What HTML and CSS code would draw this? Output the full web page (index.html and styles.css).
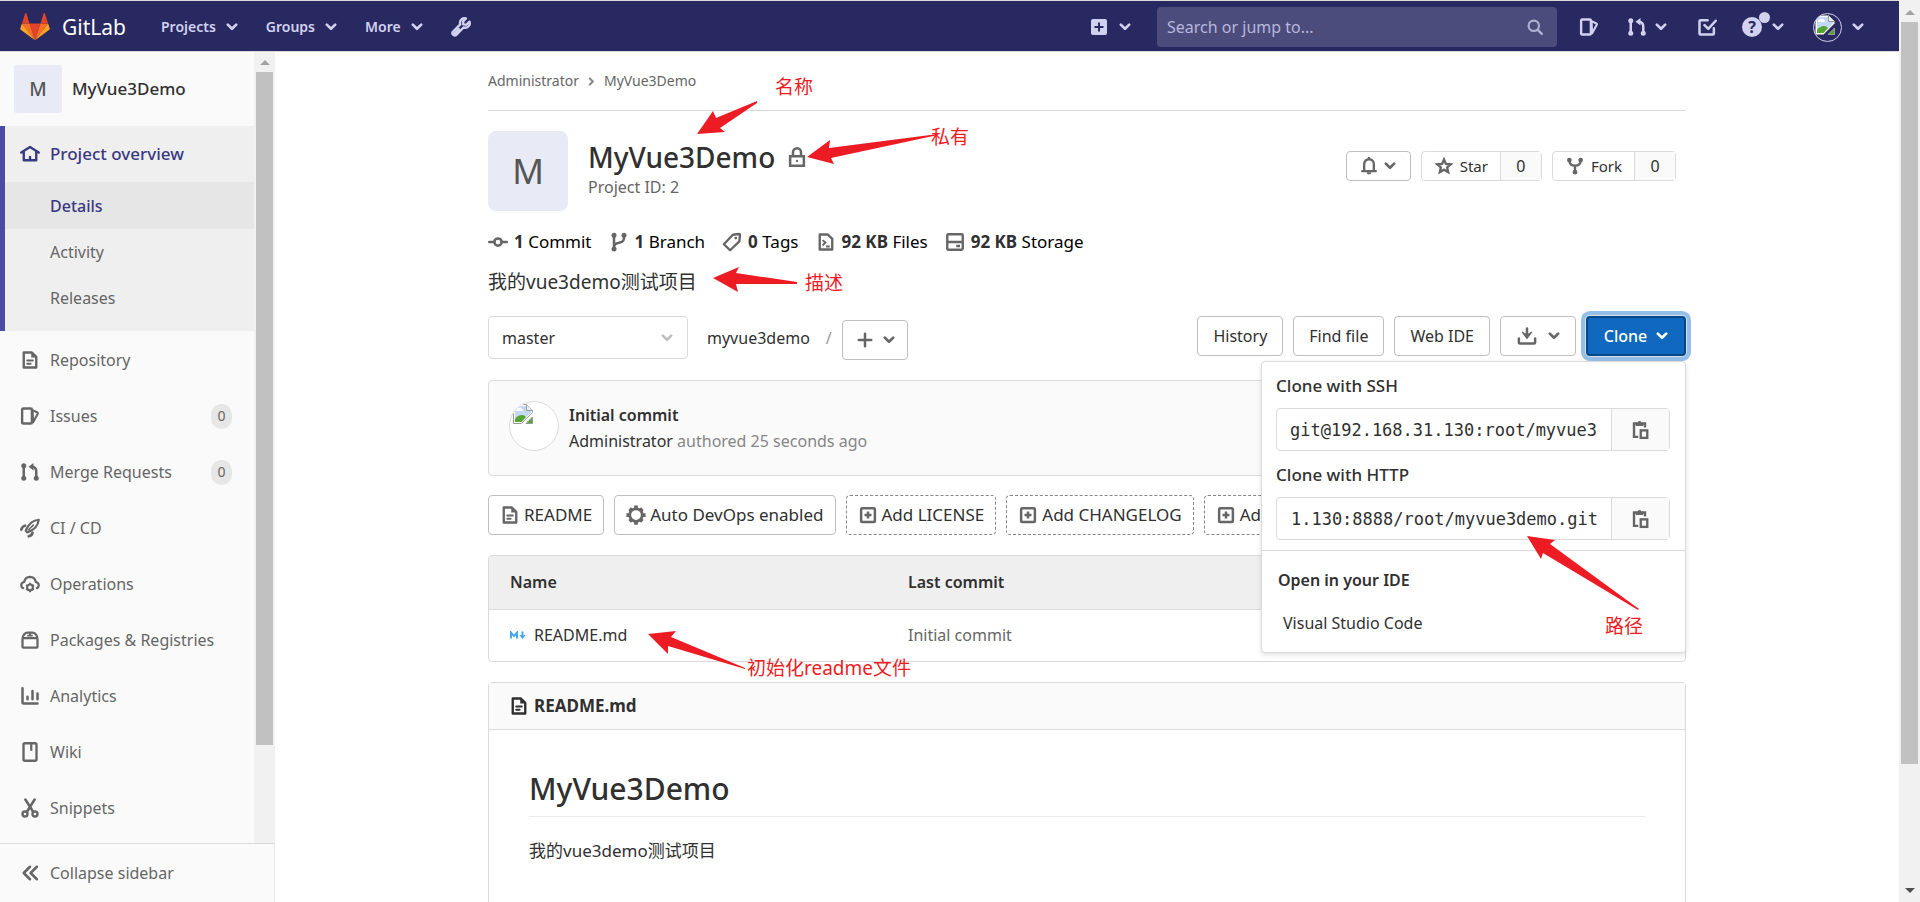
FILE: index.html
```html
<!DOCTYPE html>
<html lang="en">
<head>
<meta charset="utf-8">
<title>Administrator / MyVue3Demo · GitLab</title>
<link rel="stylesheet" href="styles.css">
</head>
<body>
<svg class="sprite" aria-hidden="true">
  <symbol id="chevron" viewBox="0 0 10 10"><path d="M1.5 3 5 6.5 8.5 3" fill="none" stroke="currentColor" stroke-width="2.2" stroke-linecap="round" stroke-linejoin="round"/></symbol>
  <symbol id="home" viewBox="0 0 16 16"><path d="M1 6.8 8 2.4l7 4.400M3 6v7h10V6M8 13v-2.600" fill="none" stroke="currentColor" stroke-width="1.9" stroke-linecap="round" stroke-linejoin="round"/></symbol>
  <symbol id="doc" viewBox="0 0 16 16"><path d="M3 2h6.500L13 5.500V14H3z" fill="none" stroke="currentColor" stroke-width="1.900" stroke-linejoin="round"/><path d="M9 1.500V6h4.500z" fill="currentColor"/><path d="M5.800 8.300h4.400M5.800 11h2.700" stroke="currentColor" stroke-width="1.600" stroke-linecap="round"/></symbol>
  <symbol id="issues" viewBox="0 0 16 16"><path d="M2.500 2h6.200q.8 0 .8.800v10.400q0 .8-.8.800H2.500q-.8 0-.8-.8V2.800q0-.8.800-.8z" fill="none" stroke="currentColor" stroke-width="1.900"/><path d="M10 3.300 14 5.200q.5.400.2 1L10.500 13z" fill="none" stroke="currentColor" stroke-width="1.700" stroke-linejoin="round"/></symbol>
  <symbol id="merge" viewBox="0 0 16 16"><path d="M3 3.500v9M13 12.500V7.500Q13 4 9.500 3.800" fill="none" stroke="currentColor" stroke-width="2"/><circle cx="3" cy="3" r="2" fill="currentColor"/><circle cx="3" cy="13" r="2" fill="currentColor"/><circle cx="13" cy="13" r="2" fill="currentColor"/><path d="M10.800.8v6L6.800 3.800z" fill="currentColor"/></symbol>
  <symbol id="rocket" viewBox="0 0 16 16"><path d="M15 1.400C11 1.600 7 4.400 4.600 10.200l1.300 1.300C11.500 9.500 14.600 5.400 15 1.400z" fill="none" stroke="currentColor" stroke-width="1.800" stroke-linejoin="round"/><path d="M11 5.300 6.500 9.800" fill="none" stroke="currentColor" stroke-width="1.200"/><path d="M1 9.200Q2 6.500 4 6.200M7 14.600q2.700-.7 3-2.800" fill="none" stroke="currentColor" stroke-width="2.200" stroke-linecap="round"/></symbol>
  <symbol id="ops" viewBox="0 0 16 16"><path d="M2.500 11.300Q.9 10.600 1 8.800q.2-2 2.300-2.400Q4.200 2.400 8 2.300q3.800.1 4.700 4.100 2.100.4 2.300 2.400.1 1.800-1.500 2.500" fill="none" stroke="currentColor" stroke-width="1.800" stroke-linecap="round"/><circle cx="8" cy="10.700" r="2.300" fill="none" stroke="currentColor" stroke-width="1.700"/><path d="M8 7v1.400M8 13v1.500M4.800 8.900l1.200.7M10 11.900l1.200.7M4.800 12.600l1.200-.7M10 9.600l1.200-.7" stroke="currentColor" stroke-width="1.500"/></symbol>
  <symbol id="package" viewBox="0 0 16 16"><path d="M2 6.500h12v6.800q0 .7-.7.700H2.700q-.7 0-.7-.7zM2 6.500Q3 2 6 2h4q3 0 4 4.500" fill="none" stroke="currentColor" stroke-width="1.800" stroke-linejoin="round"/><path d="M8 2v2.500M5.800 4.500h4.400" fill="none" stroke="currentColor" stroke-width="1.500"/></symbol>
  <symbol id="chart" viewBox="0 0 16 16"><path d="M2 1.800V13q0 1 1 1h11M6 8.500v2M10 4v6.500M14 6v4.500" fill="none" stroke="currentColor" stroke-width="2" stroke-linecap="round"/></symbol>
  <symbol id="book" viewBox="0 0 16 16"><rect x="2.800" y="1" width="10.400" height="14" rx="1.200" fill="none" stroke="currentColor" stroke-width="1.900"/><path d="M9 1v6" stroke="currentColor" stroke-width="1.800"/></symbol>
  <symbol id="scissors" viewBox="0 0 16 16"><path d="M4.300 1.200 10.500 11M11.700 1.200 5.500 11" stroke="currentColor" stroke-width="2" stroke-linecap="round"/><circle cx="4" cy="12.800" r="2" fill="none" stroke="currentColor" stroke-width="1.900"/><circle cx="12" cy="12.800" r="2" fill="none" stroke="currentColor" stroke-width="1.900"/></symbol>
  <symbol id="collapse" viewBox="0 0 16 16"><path d="M8 3 3 8l5 5M13.500 3l-5 5 5 5" fill="none" stroke="currentColor" stroke-width="2" stroke-linecap="round" stroke-linejoin="round"/></symbol>
  <symbol id="wrench" viewBox="0 0 16 16"><path d="M14.800 3.700 12.300 6.200 9.800 5.900 9.700 3.500 12 1.200C9.600.5 7.300 2 7.200 4.500q0 .8.200 1.400L1.500 11.800q-.9 1.300.2 2.400t2.500.2l5.800-6q3.200.8 4.700-1.800.6-1.300.1-2.900zM3 13l3.300-3.300" fill="none" stroke="currentColor" stroke-width="1.900" stroke-linejoin="round" stroke-linecap="round"/></symbol>
  <symbol id="plus-solid" viewBox="0 0 16 16"><path fill-rule="evenodd" d="M2 0h12a2 2 0 0 1 2 2v12a2 2 0 0 1-2 2H2a2 2 0 0 1-2-2V2a2 2 0 0 1 2-2zm5 3.500V7H3.500v2H7v3.500h2V9h3.500V7H9V3.500z" fill="currentColor"/></symbol>
  <symbol id="search" viewBox="0 0 16 16"><circle cx="6.800" cy="6.800" r="5.200" fill="none" stroke="currentColor" stroke-width="2.200"/><path d="m10.800 10.800 4 4" stroke="currentColor" stroke-width="2.400" stroke-linecap="round"/></symbol>
  <symbol id="todo" viewBox="0 0 16 16"><path d="M8.500 2.500H2.800q-.8 0-.8.800v9.900q0 .8.800.8h9.900q.8 0 .8-.8V9M6 6.500l3 3 6-6.500" fill="none" stroke="currentColor" stroke-width="2" stroke-linecap="round" stroke-linejoin="round"/></symbol>
  <symbol id="lock" viewBox="0 0 16 16"><path d="M2.500 7.300h11V15h-11zM4.800 7V4.200a3.200 3.200 0 0 1 6.400 0V7" fill="none" stroke="currentColor" stroke-width="2"/><rect x="7.200" y="10.300" width="1.600" height="1.600" fill="currentColor"/></symbol>
  <symbol id="commit" viewBox="0 0 16 16"><circle cx="8" cy="8" r="2.900" fill="none" stroke="currentColor" stroke-width="2"/><path d="M1 8h4M11 8h4" stroke="currentColor" stroke-width="2" stroke-linecap="round"/></symbol>
  <symbol id="branch" viewBox="0 0 16 16"><path d="M4 2.500v11M12 3v2Q12 8 8 8.600 4.200 9.200 4 12" fill="none" stroke="currentColor" stroke-width="2"/><circle cx="4" cy="2.500" r="2" fill="currentColor"/><circle cx="4" cy="13.500" r="2" fill="currentColor"/><circle cx="12" cy="2.500" r="2" fill="currentColor"/></symbol>
  <symbol id="tag" viewBox="0 0 16 16"><path d="M8.700 2.200 13.600 1.600q.8 0 .8.700l-.5 5.200L6.500 14.600 1.500 9.800z" fill="none" stroke="currentColor" stroke-width="1.900" stroke-linejoin="round"/><circle cx="11" cy="4.800" r="1.100" fill="currentColor"/></symbol>
  <symbol id="code-file" viewBox="0 0 16 16"><path d="M3 2h6.500L13 5.500V14H3z" fill="none" stroke="currentColor" stroke-width="1.900" stroke-linejoin="round"/><path d="M5.300 6.500 7.500 8.500 5.300 10.700M8 11.500h3" fill="none" stroke="currentColor" stroke-width="1.600"/></symbol>
  <symbol id="disk" viewBox="0 0 16 16"><rect x="1.800" y="1.800" width="12.400" height="12.400" rx="1" fill="none" stroke="currentColor" stroke-width="1.900"/><path d="M2 8h12M9 11.200h3" stroke="currentColor" stroke-width="1.900"/></symbol>
  <symbol id="bell" viewBox="0 0 16 16"><path d="M2 12.500h12M3.700 12V6.300a4.300 4.300 0 0 1 8.600 0V12" fill="none" stroke="currentColor" stroke-width="2.100" stroke-linecap="round"/><path d="M6 13.500h4a2 2 0 0 1-4 0zM7 0h2v2H7z" fill="currentColor"/></symbol>
  <symbol id="star" viewBox="0 0 16 16"><path d="m8 2.200 1.700 3.900 4.300.4-3.200 2.800.9 4.200L8 11.300l-3.700 2.200.9-4.200L2 6.500l4.300-.4z" fill="none" stroke="currentColor" stroke-width="2.100"/></symbol>
  <symbol id="fork" viewBox="0 0 16 16"><path d="M3 3Q3 7.500 8 7.700 13 7.500 13 3M8 8v5" fill="none" stroke="currentColor" stroke-width="2.100"/><circle cx="3" cy="2.700" r="2.100" fill="currentColor"/><circle cx="13" cy="2.700" r="2.100" fill="currentColor"/><circle cx="8" cy="13.500" r="2.100" fill="currentColor"/></symbol>
  <symbol id="plus" viewBox="0 0 16 16"><path d="M8 3v10M3 8h10" stroke="currentColor" stroke-width="2" stroke-linecap="round"/></symbol>
  <symbol id="download" viewBox="0 0 16 16"><path d="M1.500 10v3q0 1 1 1h11q1 0 1-1v-3M8 2v6" fill="none" stroke="currentColor" stroke-width="2" stroke-linecap="round"/><path d="m4.300 5 3.700 2.200L11.700 5 8 10z" fill="currentColor" stroke="currentColor" stroke-linejoin="round"/></symbol>
  <symbol id="gear" viewBox="0 0 16 16"><circle cx="8" cy="8" r="5" fill="none" stroke="currentColor" stroke-width="2.200"/><path d="M8 .3v2.500M8 13.200v2.500M.3 8h2.500M13.200 8h2.500M2.900 2.900l1.400 1.400M11.700 11.700l1.400 1.400M2.900 13.100l1.400-1.400M11.700 4.300l1.400-1.400" stroke="currentColor" stroke-width="3"/></symbol>
  <symbol id="plus-box" viewBox="0 0 16 16"><rect x="2.500" y="2.500" width="11" height="11" rx="1" fill="none" stroke="currentColor" stroke-width="2"/><path d="M8 5.200v5.600M5.200 8h5.600" stroke="currentColor" stroke-width="2"/></symbol>
  <symbol id="copy" viewBox="0 0 16 16"><path d="M4.500 2.800H2.400v10.700h3.400M9 2.800h2.200V6" fill="none" stroke="currentColor" stroke-width="1.900"/><path d="M3.800 1.800h1.600a1.500 1.500 0 0 1 2.800 0h1.600v3h-6z" fill="currentColor"/><rect x="7.800" y="8.300" width="5.200" height="6" fill="none" stroke="currentColor" stroke-width="1.900"/></symbol>
  <symbol id="broken" viewBox="0 0 20 20"><path d="M.5.500h13l6 6v2l-11 11h-8z" fill="#fff" stroke="#999"/><path d="M2 2h11v5h5v1.500L8.500 18H2z" fill="#c3d9f7"/><path d="M3 7q0-3 3-3 3-1 4 3z" fill="#fff"/><path d="M2 18v-3q3-4 7-4 2.500 0 4 2L8.500 18z" fill="#55a630"/><path d="M13.500.500v6h6" fill="#eee" stroke="#999"/><path d="M19.500 13v6.500H13z" fill="#55a630" stroke="#999"/></symbol>
</svg>

<div class="window">
  <div class="app">
    <header class="navbar">
      <a class="brand" href="#">
        <svg class="tanuki" viewBox="0 0 36 34"><path fill="#e24329" d="m18 33 6.600-20.400H11.400z"/><path fill="#fc6d26" d="M18 33 11.400 12.600H2.100zM18 33l6.600-20.400h9.300z"/><path fill="#fca326" d="m2.100 12.600-2 6.200c-.2.600 0 1.200.5 1.500L18 33zM33.900 12.600l2 6.200c.2.600 0 1.200-.5 1.500L18 33z"/><path fill="#e24329" d="M2.100 12.600h9.300l-4-12.200c-.2-.6-1.100-.6-1.300 0zM33.900 12.600h-9.300l4-12.200c.2-.6 1.100-.6 1.300 0z"/></svg>
        <span class="brand-name">GitLab</span>
      </a>
      <nav class="nav-links">
        <button class="nav-item">Projects <svg class="chev"><use href="#chevron"/></svg></button>
        <button class="nav-item">Groups <svg class="chev"><use href="#chevron"/></svg></button>
        <button class="nav-item">More <svg class="chev"><use href="#chevron"/></svg></button>
        <a class="nav-item" href="#" aria-label="Admin Area"><svg class="icon"><use href="#wrench"/></svg></a>
      </nav>
      <div class="nav-tools">
        <button class="nav-item new-menu" aria-label="New"><svg class="icon-sm"><use href="#plus-solid"/></svg><svg class="chev"><use href="#chevron"/></svg></button>
        <label class="search"><input type="search" placeholder="Search or jump to..." aria-label="Search or jump to"><svg class="icon-sm"><use href="#search"/></svg></label>
        <a class="nav-item tool-issues" href="#" aria-label="Issues"><svg class="icon"><use href="#issues"/></svg></a>
        <button class="nav-item tool-merge" aria-label="Merge requests"><svg class="icon"><use href="#merge"/></svg><svg class="chev"><use href="#chevron"/></svg></button>
        <a class="nav-item tool-todo" href="#" aria-label="To-Do List"><svg class="icon"><use href="#todo"/></svg></a>
        <button class="nav-item tool-help" aria-label="Help"><span class="help">?<span class="dot"></span></span><svg class="chev"><use href="#chevron"/></svg></button>
        <button class="nav-item tool-user" aria-label="Administrator"><span class="user"><svg><use href="#broken"/></svg></span><svg class="chev"><use href="#chevron"/></svg></button>
      </div>
    </header>

    <div class="body">
      <aside class="sidebar">
        <div class="side-scroll">
          <nav class="side-nav">
            <a class="context" href="#"><span class="avatar avatar-sm">M</span><span>MyVue3Demo</span></a>
            <div class="group">
              <a class="side-item active" href="#"><svg class="icon"><use href="#home"/></svg>Project overview</a>
              <a class="sub-item current" href="#">Details</a>
              <a class="sub-item" href="#">Activity</a>
              <a class="sub-item" href="#">Releases</a>
            </div>
            <a class="side-item" href="#"><svg class="icon"><use href="#doc"/></svg>Repository</a>
            <a class="side-item" href="#"><svg class="icon"><use href="#issues"/></svg>Issues<span class="badge">0</span></a>
            <a class="side-item" href="#"><svg class="icon"><use href="#merge"/></svg>Merge Requests<span class="badge">0</span></a>
            <a class="side-item" href="#"><svg class="icon"><use href="#rocket"/></svg>CI / CD</a>
            <a class="side-item" href="#"><svg class="icon"><use href="#ops"/></svg>Operations</a>
            <a class="side-item" href="#"><svg class="icon"><use href="#package"/></svg>Packages &amp; Registries</a>
            <a class="side-item" href="#"><svg class="icon"><use href="#chart"/></svg>Analytics</a>
            <a class="side-item" href="#"><svg class="icon"><use href="#book"/></svg>Wiki</a>
            <a class="side-item" href="#"><svg class="icon"><use href="#scissors"/></svg>Snippets</a>
          </nav>
          <div class="scrollbar side-bar"><span class="up"></span><span class="thumb"></span></div>
        </div>
        <button class="collapse"><svg class="icon"><use href="#collapse"/></svg>Collapse sidebar</button>
      </aside>

      <main class="content">
        <div class="container">
          <nav class="crumbs"><a href="#">Administrator</a><svg class="chev crumb-arrow"><use href="#chevron"/></svg><a href="#">MyVue3Demo</a></nav>

          <section class="project-head">
            <span class="avatar avatar-lg">M</span>
            <div class="project-title">
              <h1>MyVue3Demo <svg class="icon"><use href="#lock"/></svg></h1>
              <p>Project ID: 2</p>
            </div>
            <div class="counters">
              <button class="btn btn-bell" aria-label="Notifications"><svg class="icon"><use href="#bell"/></svg><svg class="chev"><use href="#chevron"/></svg></button>
              <div class="count-group"><button><svg class="icon"><use href="#star"/></svg>Star</button><a href="#">0</a></div>
              <div class="count-group"><button><svg class="icon"><use href="#fork"/></svg>Fork</button><a href="#">0</a></div>
            </div>
          </section>

          <nav class="stats">
            <a href="#"><svg class="icon"><use href="#commit"/></svg><span><b>1</b> Commit</span></a>
            <a href="#"><svg class="icon"><use href="#branch"/></svg><span><b>1</b> Branch</span></a>
            <a href="#"><svg class="icon"><use href="#tag"/></svg><span><b>0</b> Tags</span></a>
            <a href="#"><svg class="icon"><use href="#code-file"/></svg><span><b>92 KB</b> Files</span></a>
            <a href="#"><svg class="icon"><use href="#disk"/></svg><span><b>92 KB</b> Storage</span></a>
          </nav>
          <p class="description">我的vue3demo测试项目</p>

          <section class="tree-bar">
            <label class="ref"><select aria-label="Branch"><option>master</option></select><svg class="chev"><use href="#chevron"/></svg></label>
            <a class="path" href="#">myvue3demo</a><span class="slash">/</span>
            <button class="btn btn-add" aria-label="Add to tree"><svg class="icon"><use href="#plus"/></svg><svg class="chev"><use href="#chevron"/></svg></button>
            <div class="tree-actions">
              <a class="btn" href="#">History</a>
              <a class="btn" href="#">Find file</a>
              <a class="btn" href="#">Web IDE</a>
              <button class="btn btn-download" aria-label="Download"><svg class="icon"><use href="#download"/></svg><svg class="chev"><use href="#chevron"/></svg></button>
              <div class="clone">
                <button class="btn btn-clone">Clone <svg class="chev"><use href="#chevron"/></svg></button>
                <div class="clone-menu">
                  <div class="clone-urls">
                    <label for="ssh">Clone with SSH</label>
                    <div class="copy-field"><input id="ssh" type="text" readonly value="git@192.168.31.130:root/myvue3demo.git"><button aria-label="Copy SSH URL"><svg class="icon"><use href="#copy"/></svg></button></div>
                    <label for="http">Clone with HTTP</label>
                    <div class="copy-field"><input id="http" class="show-end" type="text" readonly value="http://192.168.31.130:8888/root/myvue3demo.git"><button aria-label="Copy HTTP URL"><svg class="icon"><use href="#copy"/></svg></button></div>
                  </div>
                  <div class="clone-ide"><h2>Open in your IDE</h2><a href="#">Visual Studio Code</a></div>
                </div>
              </div>
            </div>
          </section>

          <section class="commit">
            <span class="commit-avatar"><svg><use href="#broken"/></svg></span>
            <div class="commit-text"><a class="commit-title" href="#">Initial commit</a><p><a href="#">Administrator</a> authored 25 seconds ago</p></div>
          </section>

          <nav class="quick">
            <a class="btn" href="#"><svg class="icon"><use href="#doc"/></svg>README</a>
            <a class="btn" href="#"><svg class="icon"><use href="#gear"/></svg>Auto DevOps enabled</a>
            <a class="btn dashed" href="#"><svg class="icon"><use href="#plus-box"/></svg>Add LICENSE</a>
            <a class="btn dashed" href="#"><svg class="icon"><use href="#plus-box"/></svg>Add CHANGELOG</a>
            <a class="btn dashed" href="#"><svg class="icon"><use href="#plus-box"/></svg>Add CONTRIBUTING</a>
          </nav>

          <div class="files">
            <table>
              <thead><tr><th class="col-name">Name</th><th>Last commit</th></tr></thead>
              <tbody><tr><td><a class="file" href="#"><svg class="md" viewBox="0 0 16 8"><path d="M1 7.500V1.500l3 3.500 3-3.500v6M12.500.500v4" fill="none" stroke="#42a5f5" stroke-width="1.900"/><path d="M9.300 4h6.400l-3.200 4z" fill="#42a5f5"/></svg>README.md</a></td><td><a class="muted" href="#">Initial commit</a></td></tr></tbody>
            </table>
          </div>

          <article class="readme">
            <header><svg class="icon"><use href="#doc"/></svg><a href="#">README.md</a></header>
            <div class="readme-body"><h1>MyVue3Demo</h1><p>我的vue3demo测试项目</p></div>
          </article>

          <div class="notes">
            <svg viewBox="0 0 1198 850">
              <path d="M209 82 225 59l3 7 41-17v2l-37 25 5 4z"/>
              <path d="M319 105 342 88l-1 8 109-14v1L343 106l3 6z"/>
              <path d="m225 226 26-11-3 6 61 9v2l-61 0 2 8z"/>
              <path d="m160 582 28-3-5 6 74 31v1l-77-23 0 8z"/>
              <path d="m1039 484 28 4-5 4 89 65-1 1-95-57-2 6z"/>
            </svg>
            <span class="note note-name">名称</span>
            <span class="note note-private">私有</span>
            <span class="note note-desc">描述</span>
            <span class="note note-readme">初始化readme文件</span>
            <span class="note note-path">路径</span>
          </div>
        </div>
      </main>
    </div>
  </div>
  <div class="scrollbar page-bar"><span class="up"></span><span class="thumb"></span><span class="down"></span></div>
</div>
</body>
</html>
```

FILE: styles.css
```css
* { box-sizing: border-box; }
body {
  margin: 0;
  font: 16px/24px "Noto Sans", "Noto Sans CJK SC", sans-serif;
  color: #303030;
  background: #fff;
}
a { color: inherit; text-decoration: none; }
p, h1, h2 { margin: 0; }
button, input, select { font: inherit; color: inherit; margin: 0; }
button { background: none; border: 0; padding: 0; }
.sprite { display: none; }
.icon { width: 20px; height: 20px; flex: none; }
.icon-sm { width: 16px; height: 16px; flex: none; }
.chev { width: 12px; height: 12px; flex: none; }

.window { display: flex; height: 100vh; overflow: hidden; }
.app { flex: 1; min-width: 0; display: flex; flex-direction: column; }

/* Scrollbars */
.scrollbar { width: 21px; flex: none; background: #f1f1f1; display: flex; flex-direction: column; align-items: center; }
.scrollbar .thumb { width: 17px; background: #c1c1c1; }
.up, .down { border: 5px solid transparent; }
.up { border-top: 0; border-bottom-color: #a3a3a3; }
.down { border-bottom: 0; border-top-color: #505050; }
.page-bar { padding: 10px 0 9px; gap: 7px; }
.page-bar .thumb { height: 84%; }
.page-bar .down { margin-top: auto; }
.side-bar { padding: 8px 0 0; gap: 7px; }
.side-bar .thumb { height: 86%; }

/* Navbar */
.navbar {
  height: 52px; flex: none; display: flex; align-items: center;
  padding: 2px 0 0 20px; background: #292961; color: #d1d1f0;
  border-top: 1px solid #dbdbdb; border-bottom: 1px solid #dbdbdb;
}
.brand { display: flex; align-items: center; gap: 12px; width: 141px; color: #fff; }
.tanuki { width: 30px; height: 28px; }
.brand-name { font-size: 21px; }
.nav-links { display: flex; gap: 28px; font-size: 14px; font-weight: 600; }
.nav-item { display: flex; align-items: center; gap: 10px; }
.nav-tools { margin-left: auto; display: flex; align-items: center; padding-right: 35px; }
.new-menu { gap: 12px; margin-right: 26px; }
.search { display: flex; align-items: center; width: 400px; height: 40px; padding: 0 14px 0 10px; border-radius: 4px; background: #4c4c7c; margin-right: 22px; color: #afafd4; }
.search input { flex: 1; min-width: 0; border: 0; padding: 0; background: none; outline: 0; }
.search input::placeholder { color: #b7b7dc; }
.tool-issues { margin-right: 28px; }
.tool-merge { gap: 8px; margin-right: 30px; }
.tool-todo { margin-right: 25px; }
.tool-help { margin-right: 29px; }
.help { position: relative; width: 20px; height: 20px; border-radius: 50%; background: #d1d1f0; color: #292961; font-size: 16px; line-height: 20px; font-weight: 700; text-align: center; }
.dot { position: absolute; right: -8px; top: -5px; width: 11px; height: 11px; border-radius: 50%; background: #d1d1f0; }
.user { width: 29px; height: 29px; border: 1px solid #d1d1f0; border-radius: 50%; overflow: hidden; display: flex; padding: 1px; }
.user svg { width: 20px; height: 20px; }

/* Sidebar */
.body { flex: 1; min-height: 0; display: flex; }
.sidebar { width: 275px; flex: none; display: flex; flex-direction: column; background: #fafafa; color: #666; }
.side-scroll { flex: 1; min-height: 0; display: flex; overflow: hidden; }
.side-nav { flex: 1; }
.context { display: flex; align-items: center; gap: 10px; height: 74px; padding-left: 14px; color: #303030; font-size: 17px; font-weight: 500; }
.avatar { display: flex; align-items: center; justify-content: center; background: #e8eaf6; color: #555; }
.avatar-sm { width: 48px; height: 48px; border-radius: 3px; font-size: 19px; }
.avatar-lg { width: 80px; height: 80px; border-radius: 8px; font-size: 35px; }
.group { border-left: 5px solid #4b4ba3; background: #efefef; padding-bottom: 10px; margin-bottom: 1px; }
.side-item { display: flex; align-items: center; gap: 10px; height: 56px; padding: 0 22px 0 20px; }
.group .side-item { padding-left: 15px; font-size: 17px; }
.active, .current { color: #393982; font-weight: 500; }
.sub-item { display: flex; align-items: center; height: 46px; padding-left: 45px; }
.current { height: 47px; background: #e6e6e6; }
.badge { margin-left: auto; width: 21px; height: 25px; border-radius: 12px; background: #e6e6e6; font-size: 14px; text-align: center; }
.collapse { display: flex; align-items: center; gap: 10px; height: 59px; padding-left: 20px; border-top: 1px solid #dbdbdb; border-right: 1px solid #e6e6e6; }

/* Content */
.content { flex: 1; min-width: 0; padding: 0 20px; overflow: hidden; }
.container { position: relative; max-width: 1198px; margin: 0 auto; }
.crumbs { display: flex; align-items: center; height: 59px; border-bottom: 1px solid #dbdbdb; font-size: 14px; color: #666; }
.crumb-arrow { transform: rotate(-90deg); margin: 0 8px; width: 9px; height: 9px; color: #868686; }
.project-head { display: flex; margin-top: 20px; height: 80px; }
.project-title { margin-left: 20px; color: #666; }
.project-title h1 { display: flex; align-items: center; gap: 12px; font-size: 28px; line-height: 36px; margin-top: 8px; font-weight: 500; color: #303030; }
.project-title h1 .icon { color: #666; }
.project-title p { line-height: 24px; }
.counters { margin-left: auto; display: flex; gap: 10px; padding: 20px 10px 0 0; height: 50px; }
.counters .icon { width: 18px; height: 18px; }
.btn {
  display: flex; align-items: center; justify-content: center; height: 40px;
  border: 1px solid #bfbfbf; border-radius: 4px; background: #fff; color: #303030; white-space: nowrap;
}
.btn .icon, .btn .chev, .count-group .icon { color: #666; }
.btn-bell { width: 65px; height: 30px; gap: 6px; }
.count-group { display: flex; height: 30px; border: 1px solid #dbdbdb; border-radius: 4px; }
.count-group button { display: flex; align-items: center; gap: 7px; padding: 0 12px 0 13px; font-size: 15px; }
.count-group a { width: 41px; text-align: center; line-height: 28px; background: #fafafa; border-left: 1px solid #dbdbdb; }
.stats { display: flex; gap: 17px; margin-top: 19px; color: #000; font-size: 17px; }
.stats a { display: flex; align-items: center; gap: 6px; }
.stats b { font-weight: 700; color: #303030; }
.stats .icon { color: #666; }
.description { margin-top: 14px; font-size: 19px; line-height: 28px; }

.tree-bar { display: flex; align-items: flex-start; margin-top: 20px; height: 44px; }
.ref { display: flex; align-items: center; width: 200px; height: 43px; border: 1px solid #dbdbdb; border-radius: 4px; padding-right: 14px; color: #bfbfbf; }
.ref select { flex: 1; height: 41px; appearance: none; border: 0; background: none; padding: 0 13px; color: #303030; }
.path { margin-left: 19px; line-height: 44px; }
.slash { margin: 0 10px 0 16px; line-height: 44px; color: #999; }
.btn-add { width: 66px; margin-top: 4px; gap: 8px; }
.tree-actions { margin-left: auto; display: flex; gap: 10px; }
.tree-actions > a { padding: 0 15px; }
.btn-download { width: 76px; gap: 11px; }
.clone { position: relative; }
.btn-clone { width: 100px; gap: 9px; background: #1068bf; border: 2px solid #064787; color: #fff; font-weight: 500; box-shadow: 0 0 0 1px #cfe2f5, 0 0 0 5px #96bfe7; }
.btn-clone .chev { color: #fff; }
.clone-menu { position: absolute; right: 0; top: 45px; width: 425px; z-index: 2; background: #fff; border: 1px solid #dbdbdb; border-radius: 4px; box-shadow: 0 2px 5px rgba(0,0,0,.12); }
.clone-urls { padding: 12px 15px 10px 14px; border-bottom: 1px solid #dbdbdb; }
.clone-urls label { display: block; font-size: 17px; font-weight: 500; }
.copy-field { display: flex; height: 43px; margin: 10px 0 12px; border: 1px solid #dbdbdb; border-radius: 4px; }
.copy-field:last-child { margin-bottom: 0; }
.copy-field input { flex: 1; min-width: 0; border: 0; padding: 0 13px; background: none; outline: 0; font: 17px "DejaVu Sans Mono", monospace; }
.copy-field .show-end { direction: rtl; }
.copy-field button { width: 58px; border-left: 1px solid #dbdbdb; background: #fafafa; color: #666; display: flex; align-items: center; justify-content: center; }
.clone-ide { padding: 17px 16px; }
.clone-ide h2 { font-size: 16px; font-weight: 600; }
.clone-ide a { display: block; padding: 19px 5px 0; }

.commit { display: flex; gap: 10px; margin-top: 20px; height: 96px; padding: 20px; background: #fafafa; border: 1px solid #dbdbdb; border-radius: 4px; color: #868686; }
.commit-text { padding-top: 1px; }
.commit p, .commit-title { display: block; line-height: 26px; }
.commit p a { color: #303030; }
.commit-title { color: #303030; font-weight: 600; }
.commit-avatar { width: 50px; height: 50px; border: 1px solid #dbdbdb; border-radius: 50%; background: #fff; overflow: hidden; display: flex; padding: 2px 3px; }
.commit-avatar svg { width: 20px; height: 20px; }
.quick { display: flex; gap: 10px; margin-top: 19px; overflow: hidden; font-size: 17px; }
.quick .btn { gap: 4px; padding: 0 11px; }
.quick .dashed { border: 1px dashed #868686; }
.files { margin-top: 20px; border: 1px solid #dbdbdb; border-radius: 4px; overflow: hidden; }
.files table { width: 100%; border-collapse: collapse; table-layout: fixed; }
.files th, .files td { height: 53px; padding: 0 21px; text-align: left; }
.files td { height: 52px; }
.files th { background: #efefef; font-weight: 600; border-bottom: 1px solid #dbdbdb; }
.col-name { width: 398px; }
.file { display: flex; align-items: center; gap: 8px; }
.md { width: 16px; height: 8px; }
.muted { color: #666; }
.readme { margin-top: 20px; border: 1px solid #dbdbdb; border-radius: 4px 4px 0 0; }
.readme > header { display: flex; align-items: center; gap: 5px; height: 47px; padding-left: 20px; background: #fafafa; border-bottom: 1px solid #dbdbdb; font-weight: 700; font-size: 17px; }
.readme-body { padding: 39px 40px; min-height: 320px; font-size: 17px; }
.readme-body h1 { font-size: 30px; line-height: 40px; font-weight: 500; padding-bottom: 7px; border-bottom: 1px solid #eaeaea; margin-bottom: 22px; }

/* Red callouts drawn over the page */
.notes { position: absolute; left: 0; top: 0; width: 1198px; height: 850px; z-index: 3; pointer-events: none; color: #ed1c24; }
.notes svg { position: absolute; left: 0; top: 0; width: 1198px; height: 850px; fill: #ed1c24; }
.note { position: absolute; font-size: 19px; line-height: 24px; white-space: nowrap; }
.note-name { left: 287px; top: 23px; }
.note-private { left: 443px; top: 73px; }
.note-desc { left: 317px; top: 219px; }
.note-readme { left: 259px; top: 604px; }
.note-path { left: 1117px; top: 562px; }
```
